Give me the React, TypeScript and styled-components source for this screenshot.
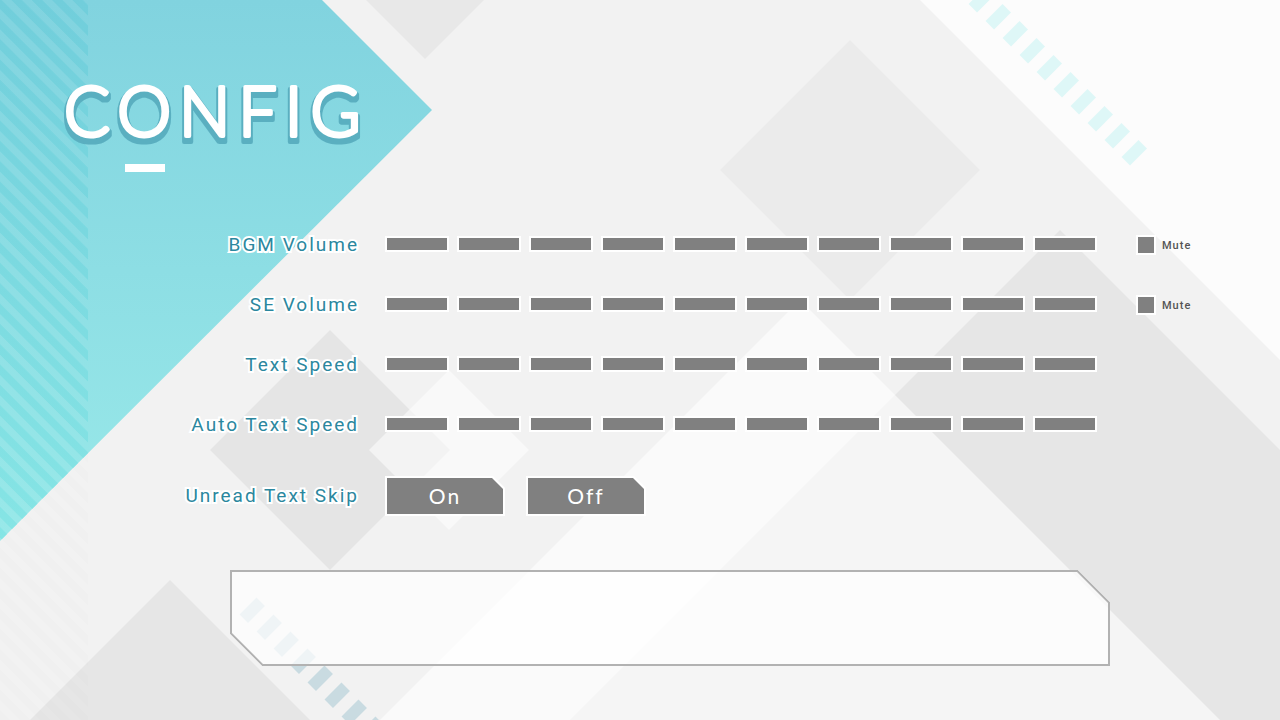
import React, { useState } from "react";
import styled, { createGlobalStyle } from "styled-components";

const GlobalStyle = createGlobalStyle`
  *, *::before, *::after { box-sizing: border-box; }
  body {
    margin: 0;
    background: #f2f2f2;
    font-family: Roboto, "Liberation Sans", sans-serif;
  }
`;

const Screen = styled.main`
  position: relative;
  min-height: 100vh;
  padding: 74px 0 54px;
  overflow: hidden;
`;

const Backdrop = styled.svg`
  position: absolute;
  inset: 0;
  width: 100%;
  height: 100%;
`;

const Content = styled.div`
  position: relative;
`;

const Header = styled.header`
  padding-left: 60px;
`;

const Title = styled.h1`
  margin: 0;
  height: 90px;
`;

const TitleArt = styled.svg`
  display: block;
  overflow: visible;
`;

const TitleText = styled.text`
  font-family: Lato, "Liberation Sans", sans-serif;
  font-size: 68px;
  font-weight: 300;
  letter-spacing: 8px;
  fill: #fff;
  stroke: #fff;
  stroke-width: 4px;
  stroke-linejoin: round;
`;

const TitleDash = styled.div`
  width: 40px;
  height: 8px;
  margin-left: 65px;
  background: #fff;
`;

const Settings = styled.div`
  margin-top: 43px;
  padding-right: 90px;
`;

const Row = styled.div<{ $spaced?: boolean }>`
  display: grid;
  grid-template-columns: 359px 1fr 54px;
  align-items: center;
  height: 60px;
  margin-top: ${(p) => (p.$spaced ? 11 : 0)}px;
`;

const RowLabel = styled.span`
  text-align: right;
  font-size: 19px;
  line-height: 24px;
  letter-spacing: 2px;
  color: #2b879e;
  paint-order: stroke fill;
  -webkit-text-stroke: 4px #fff;
`;

const Steps = styled.div`
  display: grid;
  grid-template-columns: repeat(10, 1fr);
  gap: 8px;
  padding: 0 0 2px;
  margin: 0 39px 0 26px;
`;

const Step = styled.input`
  appearance: none;
  width: 100%;
  height: 16px;
  margin: 0;
  border: 2px solid #fff;
  background: #808080;
  cursor: pointer;
`;

const MuteLabel = styled.label`
  display: flex;
  align-items: center;
  gap: 6px;
  color: #555;
`;

const MuteText = styled.span`
  padding-top: 2px;
  font-size: 11px;
  font-weight: 500;
  line-height: 18px;
  letter-spacing: 1px;
`;

const MuteBox = styled.input`
  appearance: none;
  flex: none;
  width: 20px;
  height: 20px;
  margin: 0;
  border: 2px solid #fff;
  background: #808080;
`;

const Choices = styled.div`
  display: flex;
  gap: 21px;
  margin-left: 26px;
`;

const Choice = styled.button`
  position: relative;
  width: 120px;
  height: 40px;
  padding: 0;
  border: 0;
  background: #fff;
  clip-path: polygon(0 0, calc(100% - 12px) 0, 100% 12px, 100% 100%, 0 100%);
  color: #fff;
  font-family: Lato, "Liberation Sans", sans-serif;
  font-size: 21px;
  line-height: 40px;
  letter-spacing: 2px;
  cursor: pointer;

  &::before {
    content: "";
    position: absolute;
    inset: 2px;
    background: #808080;
    clip-path: polygon(0 0, calc(100% - 11px) 0, 100% 11px, 100% 100%, 0 100%);
  }
`;

const ChoiceText = styled.span`
  position: relative;
`;

const Preview = styled.section`
  position: relative;
  height: 96px;
  margin: 44px 170px 0 230px;
  background: rgba(255, 255, 255, 0.7);
  clip-path: polygon(
    0 0, calc(100% - 32px) 0, 100% 32px, 100% 100%, 32px 100%, 0 calc(100% - 32px)
  );

  &::before {
    content: "";
    position: absolute;
    inset: 0;
    background: #b2b2b2;
    clip-path: polygon(
      evenodd,
      0 0, calc(100% - 32px) 0, 100% 32px, 100% 100%, 32px 100%, 0 calc(100% - 32px), 0 0,
      2px 2px, calc(100% - 33px) 2px, calc(100% - 2px) 33px, calc(100% - 2px) calc(100% - 2px),
      33px calc(100% - 2px), 2px calc(100% - 33px), 2px 2px
    );
  }
`;

const sliders = [
  { id: "bgm", label: "BGM Volume", mute: true },
  { id: "se", label: "SE Volume", mute: true },
  { id: "text", label: "Text Speed", mute: false },
  { id: "auto", label: "Auto Text Speed", mute: false },
];

function Background() {
  return (
    <Backdrop viewBox="0 0 1280 720" preserveAspectRatio="xMinYMin slice" aria-hidden="true">
      <defs>
        <linearGradient id="teal" gradientUnits="userSpaceOnUse" x1="0" y1="0" x2="0" y2="541">
          <stop offset="0" stopColor="#81d3df" />
          <stop offset="1" stopColor="#99e9e9" />
        </linearGradient>
        <linearGradient id="tealStripe" gradientUnits="userSpaceOnUse" x1="0" y1="0" x2="0" y2="541">
          <stop offset="0" stopColor="#71cedb" />
          <stop offset="1" stopColor="#86e5e5" />
        </linearGradient>
        <pattern
          id="stripes"
          patternUnits="userSpaceOnUse"
          width="20.33"
          height="20"
          patternTransform="translate(11.33 0) skewX(45)"
        >
          <rect width="10.5" height="20" fill="#fff" />
        </pattern>
        <mask id="stripeMask" maskUnits="userSpaceOnUse" x="0" y="0" width="88" height="720">
          <rect width="88" height="720" fill="url(#stripes)" />
        </mask>
      </defs>
      <rect width="1280" height="720" fill="#f2f2f2" />
      <polygon points="366,0 484,0 425,59" fill="#e8e8e8" />
      <polygon points="850,40 980,170 850,300 720,170" fill="#ebebeb" />
      <polygon points="330,330 450,450 330,570 210,450" fill="#e5e5e5" />
      <polygon points="1060,230 1550,720 570,720" fill="#e6e6e6" />
      <polygon points="170,580 310,720 30,720" fill="#e6e6e6" />
      <polygon points="449,370 529,450 449,530 369,450" fill="#fff" fillOpacity="0.53" />
      <polygon points="800,300 1220,720 380,720" fill="#fff" fillOpacity="0.6" />
      <polygon points="920,0 1280,0 1280,360" fill="#fcfcfc" />
      <path d="M1138.5 157L960-21.5" stroke="#def7f7" strokeWidth="24" strokeDasharray="12 12.04" />
      <path d="M248 606L378 736" stroke="#c9dbe1" strokeWidth="24" strokeDasharray="12 12.04" />
      <rect width="88" height="720" fill="#000" fillOpacity="0.009" mask="url(#stripeMask)" />
      <polygon points="0,0 322,0 432,110 0,541" fill="url(#teal)" />
      <polygon points="0,0 88,0 88,453 0,541" fill="url(#tealStripe)" mask="url(#stripeMask)" />
    </Backdrop>
  );
}

function TitleLogo() {
  return (
    <TitleArt width="310" height="80">
      <defs>
        <filter id="titleShadow" x="-5%" y="-20%" width="110%" height="140%" colorInterpolationFilters="sRGB">
          <feMorphology in="SourceAlpha" operator="dilate" radius="2" result="wide" />
          <feOffset in="wide" dy="4" result="moved" />
          <feFlood floodColor="#5aafc0" />
          <feComposite in2="moved" operator="in" result="shadow" />
          <feMerge>
            <feMergeNode in="shadow" />
            <feMergeNode in="SourceGraphic" />
          </feMerge>
        </filter>
      </defs>
      <TitleText x="4" y="62" filter="url(#titleShadow)">CONFIG</TitleText>
    </TitleArt>
  );
}

export default function App() {
  const [skip, setSkip] = useState("");

  return (
    <>
      <GlobalStyle />
      <Screen>
        <Background />
        <Content>
          <Header>
            <Title>
              <TitleLogo />
            </Title>
            <TitleDash />
          </Header>
          <Settings>
            {sliders.map((s) => (
              <Row key={s.id} role="group" aria-labelledby={`${s.id}-label`}>
                <RowLabel id={`${s.id}-label`}>{s.label}</RowLabel>
                <Steps>
                  {Array.from({ length: 10 }, (_, i) => (
                    <Step key={i} type="radio" name={s.id} value={i + 1} aria-label={`${s.label} ${i + 1}`} />
                  ))}
                </Steps>
                {s.mute && (
                  <MuteLabel>
                    <MuteBox type="checkbox" name={`${s.id}-mute`} />
                    <MuteText>Mute</MuteText>
                  </MuteLabel>
                )}
              </Row>
            ))}
            <Row $spaced role="group" aria-labelledby="skip-label">
              <RowLabel id="skip-label">Unread Text Skip</RowLabel>
              <Choices>
                {["On", "Off"].map((c) => (
                  <Choice key={c} type="button" aria-pressed={skip === c} onClick={() => setSkip(c)}>
                    <ChoiceText>{c}</ChoiceText>
                  </Choice>
                ))}
              </Choices>
            </Row>
          </Settings>
          <Preview aria-label="Text preview" />
        </Content>
      </Screen>
    </>
  );
}
